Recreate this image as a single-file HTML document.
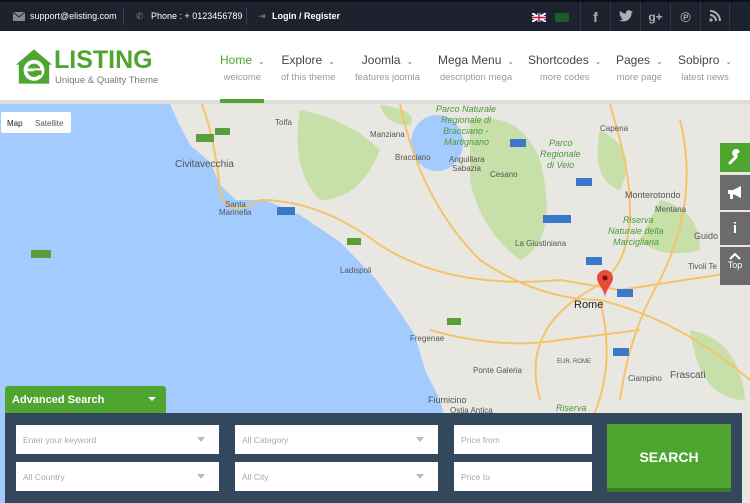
<!DOCTYPE html>
<html><head><meta charset="utf-8"><style>
*{margin:0;padding:0;box-sizing:border-box}
body{width:750px;height:503px;overflow:hidden;font-family:"Liberation Sans",sans-serif;position:relative;background:#fff}
.top{position:absolute;left:0;top:0;width:750px;height:31px;background:#1c232e;border-top:2px solid #0d1117;color:#fff;font-size:9px}
.top span{position:absolute;top:9px}
.soc{position:absolute;top:0;height:31px;width:30px;border-left:1px solid #2e3744;color:#a9b0b8;font-size:14px;text-align:center;line-height:31px;font-weight:bold}
.soc svg{margin-top:8px}
.hdr{position:absolute;top:31px;left:0;width:750px;height:69px;background:#fff}
.nav{position:absolute;top:22px;text-align:center;color:#444;font-size:12px}
.nav small{display:block;font-size:9.5px;color:#999;margin-top:5px}
.nav i{font-style:normal;font-size:8px;color:#777;margin-left:6px}
.gl{position:absolute;top:100px;left:0;width:750px;height:4px;background:#dcdcdc}
.map{position:absolute;top:104px;left:0}
.tool{position:absolute;left:720px;width:30px;color:#fff;text-align:center}
.inp{position:absolute;background:#fff;height:29px;font-size:8.5px;color:#aaa;padding:10px 7px}
.inp b{position:absolute;right:14px;top:12px;border:4px solid transparent;border-top:5px solid #bbb;width:0;height:0}
</style></head><body>
<div class="top">
<svg style="position:absolute;left:13px;top:10px" width="12" height="9"><rect width="12" height="9" fill="#888"/><path d="M0 0 L6 5 L12 0" stroke="#1c232e" fill="none"/></svg><span style="left:30px">support@elisting.com</span>
<span style="left:123px;top:6px;width:1px;height:17px;background:#3a4350"></span>
<span style="left:136px;color:#888">✆</span><span style="left:151px">Phone : + 0123456789</span>
<span style="left:246px;top:6px;width:1px;height:17px;background:#3a4350"></span>
<span style="left:258px;color:#888">⇥</span><span style="left:272px;font-weight:bold">Login / Register</span>
<svg style="position:absolute;left:532px;top:11px" width="14" height="9"><rect width="14" height="9" fill="#012169"/><path d="M0 0L14 9M14 0L0 9" stroke="#fff" stroke-width="2"/><path d="M7 0V9M0 4.5H14" stroke="#fff" stroke-width="3"/><path d="M7 0V9M0 4.5H14" stroke="#c8102e" stroke-width="1.5"/></svg>
<span style="left:555px;top:11px;width:14px;height:9px;background:#1a5c2a"></span>
<div class="soc" style="left:580px">f</div>
<div class="soc" style="left:610px"><svg width="14" height="12" viewBox="0 0 24 20"><path d="M24 2.3c-.9.4-1.8.7-2.8.8 1-.6 1.8-1.6 2.2-2.7-1 .6-2 1-3.1 1.2A4.9 4.9 0 0 0 11.9 6C7.8 5.8 4.2 3.9 1.7.9c-1.3 2.3-.5 5 1.5 6.5-.8 0-1.6-.3-2.2-.6 0 2.4 1.7 4.4 3.9 4.8-.7.2-1.5.2-2.2.1.6 2 2.4 3.4 4.6 3.4A9.9 9.9 0 0 1 0 17.1 14 14 0 0 0 7.5 19.3c9.1 0 14-7.5 14-14v-.6c1-.7 1.8-1.5 2.5-2.4z" fill="#a9b0b8"/></svg></div>
<div class="soc" style="left:640px;font-size:12px">g+</div>
<div class="soc" style="left:670px">℗</div>
<div class="soc" style="left:700px;border-right:1px solid #2e3744"><svg width="12" height="12" viewBox="0 0 12 12"><circle cx="2" cy="10" r="1.6" fill="#a9b0b8"/><path d="M1 5a6 6 0 0 1 6 6M1 1a10 10 0 0 1 10 10" stroke="#a9b0b8" stroke-width="2" fill="none"/></svg></div>
</div>
<div class="hdr">
<svg style="position:absolute;left:15px;top:17px" width="38" height="37" viewBox="0 0 40 38"><path d="M20 1 L39 17 L36 17 L36 37 L4 37 L4 17 L1 17 Z" fill="#4ea52f"/><circle cx="20" cy="23" r="11" fill="#fff"/><circle cx="20" cy="23" r="7" fill="#4ea52f"/><rect x="12" y="21" width="16" height="3" fill="#fff"/><rect x="20" y="23" width="8" height="5" fill="#4ea52f"/></svg>
<div style="position:absolute;left:54px;top:15px;font-size:25px;font-weight:bold;color:#4ea52f">LISTING</div>
<div style="position:absolute;left:55px;top:44px;font-size:9.5px;color:#777">Unique &amp; Quality Theme</div>
<div class="nav" style="left:220px;color:#4ea52f">Home<i>⌄</i><small>welcome</small></div>
<div class="nav" style="left:281px">Explore<i>⌄</i><small>of this theme</small></div>
<div class="nav" style="left:355px">Joomla<i>⌄</i><small>features joomla</small></div>
<div class="nav" style="left:438px">Mega Menu<i>⌄</i><small>description mega</small></div>
<div class="nav" style="left:528px">Shortcodes<i>⌄</i><small>more codes</small></div>
<div class="nav" style="left:616px">Pages<i>⌄</i><small>more page</small></div>
<div class="nav" style="left:678px">Sobipro<i>⌄</i><small>latest news</small></div>
</div>
<div class="gl"></div><div style="position:absolute;left:220px;top:99px;width:44px;height:4px;background:#4ea52f"></div>
<svg class="map" width="750" height="399" viewBox="0 104 750 399" font-family="Liberation Sans" font-size="8">
<rect x="0" y="104" width="750" height="399" fill="#e9e7e1"/>
<path d="M0 104 L170 104 L178 122 L190 145 L210 162 L220 185 L236 200 L265 200 L300 215 L340 242 L375 278 L395 305 L415 335 L425 370 L440 400 L450 440 L456 503 L0 503 Z" fill="#a3cbfd"/>
<g fill="#c7dfa8">
<path d="M300 110 Q350 120 380 150 Q360 200 320 200 Q290 170 300 110Z"/>
<path d="M470 120 Q520 110 540 160 Q560 240 520 260 Q480 230 470 180Z"/>
<path d="M600 130 Q640 150 620 190 Q590 180 600 130Z"/>
<path d="M660 200 Q700 210 700 250 Q660 260 640 240Z"/>
<path d="M380 105 Q420 110 410 125 Q385 125 380 105Z"/>
<path d="M690 330 Q740 340 745 400 Q700 400 690 330Z"/>
</g>
<ellipse cx="437" cy="143" rx="26" ry="28" fill="#a3cbfd"/>
<g fill="none" stroke="#f3c46b" stroke-width="2">
<path d="M202 104 Q215 140 220 190 Q225 220 260 200 Q320 200 380 245 Q450 290 560 280 L620 290 L750 270"/>
<path d="M540 400 Q520 330 590 290 Q650 260 620 140 L610 104"/>
<path d="M400 104 Q420 200 480 260 Q540 300 600 300 Q680 320 750 380"/>
<path d="M600 300 Q620 380 580 440 Q560 480 520 503"/>
<path d="M680 120 Q700 200 660 280 Q630 330 620 400"/>
<path d="M430 330 Q500 350 560 340 L640 330"/>
</g>
<g fill="#555">
<text x="175" y="167" font-size="10">Civitavecchia</text><text x="275" y="125">Tolfa</text>
<text x="225" y="207">Santa</text><text x="219" y="215">Marinella</text>
<text x="370" y="137">Manziana</text><text x="395" y="160">Bracciano</text><text x="449" y="162">Anguillara</text><text x="452" y="171">Sabazia</text>
<text x="490" y="177">Cesano</text><text x="340" y="273">Ladispoli</text><text x="410" y="341">Fregenae</text>
<text x="473" y="373">Ponte Galeria</text><text x="428" y="403" font-size="9">Fiumicino</text><text x="450" y="413">Ostia Antica</text>
<text x="515" y="246">La Giustiniana</text><text x="600" y="131">Capena</text><text x="625" y="198" font-size="9">Monterotondo</text>
<text x="655" y="212">Mentana</text><text x="694" y="239" font-size="9">Guido</text><text x="688" y="269">Tivoli Te</text>
<text x="574" y="308" font-size="11" fill="#222">Rome</text><text x="557" y="363" font-size="6">EUR, ROME</text>
<text x="628" y="381">Ciampino</text><text x="670" y="378" font-size="10">Frascati</text>
</g>
<g fill="#4a9a3a" font-style="italic" font-size="9"><text x="436" y="112">Parco Naturale</text><text x="441" y="123">Regionale di</text><text x="443" y="134">Bracciano -</text><text x="444" y="145">Martignano</text>
<text x="549" y="146">Parco</text><text x="540" y="157">Regionale</text><text x="547" y="168">di Veio</text>
<text x="623" y="223">Riserva</text><text x="608" y="234">Naturale della</text><text x="613" y="245">Marcigliana</text><text x="556" y="411">Riserva</text></g>
<path d="M605 270 a8 8 0 0 1 8 8 c0 6 -8 12 -8 20 c0 -8 -8 -14 -8 -20 a8 8 0 0 1 8 -8z" fill="#e94a3c"/><circle cx="605" cy="278" r="2.5" fill="#6b1410"/>
<rect x="1" y="112" width="70" height="21" fill="#fff" rx="2"/><text x="7" y="126" fill="#222">Map</text><text x="35" y="126" fill="#555">Satellite</text>
<g fill="#5a9e3a"><rect x="196" y="134" width="18" height="8"/><rect x="31" y="250" width="20" height="8"/><rect x="215" y="128" width="15" height="7"/><rect x="347" y="238" width="14" height="7"/><rect x="447" y="318" width="14" height="7"/></g>
<g fill="#3a79c9"><rect x="277" y="207" width="18" height="8"/><rect x="510" y="139" width="16" height="8"/><rect x="576" y="178" width="16" height="8"/><rect x="543" y="215" width="28" height="8"/><rect x="586" y="257" width="16" height="8"/><rect x="617" y="289" width="16" height="8"/><rect x="613" y="348" width="16" height="8"/></g>
</svg>
<div class="tool" style="top:143px;height:29px;background:#4ea52f"><svg style="margin-top:6px" width="16" height="16" viewBox="0 0 16 16"><path d="M3 14 L9 8" stroke="#fff" stroke-width="3" stroke-linecap="round"/><path d="M9 8 a4 4 0 1 1 4 -5 l-3 2 1 2 2 -1 z" fill="#fff"/></svg></div>
<div class="tool" style="top:175px;height:35px;background:#6b6b6b"><svg style="margin-top:10px" width="16" height="15" viewBox="0 0 16 15"><path d="M1 5 H6 L14 1 V13 L6 9 H1 Z" fill="#fff"/><rect x="3" y="9" width="3" height="5" fill="#fff"/></svg></div>
<div class="tool" style="top:212px;height:33px;background:#6b6b6b;font-size:15px;line-height:33px;font-weight:bold">i</div>
<div class="tool" style="top:247px;height:38px;background:#6b6b6b;font-size:9px"><svg style="margin-top:6px;display:block;margin-left:9px" width="12" height="7"><path d="M1 6 L6 1 L11 6" stroke="#fff" stroke-width="2" fill="none"/></svg>Top</div>
<div style="position:absolute;left:5px;top:386px;width:161px;height:28px;background:#4ea52f;border-radius:3px 3px 0 0;color:#fff;font-size:11px;font-weight:bold;padding:8px 7px">Advanced Search<span style="position:absolute;right:10px;top:11px;border:4px solid transparent;border-top:4px solid #fff"></span></div>
<div style="position:absolute;left:5px;top:413px;width:737px;height:90px;background:#34485d"></div>
<div class="inp" style="left:16px;top:425px;width:203px">Enter your keyword<b></b></div>
<div class="inp" style="left:235px;top:425px;width:203px">All Category<b></b></div>
<div class="inp" style="left:454px;top:425px;width:138px">Price from</div>
<div class="inp" style="left:16px;top:462px;width:203px">All Country<b></b></div>
<div class="inp" style="left:235px;top:462px;width:203px">All City<b></b></div>
<div class="inp" style="left:454px;top:462px;width:138px">Price to</div>
<div style="position:absolute;left:607px;top:424px;width:124px;height:68px;background:#4ea52f;border-bottom:4px solid #3a7d22;color:#fff;font-weight:bold;font-size:14px;text-align:center;line-height:66px">SEARCH</div>
</body></html>
